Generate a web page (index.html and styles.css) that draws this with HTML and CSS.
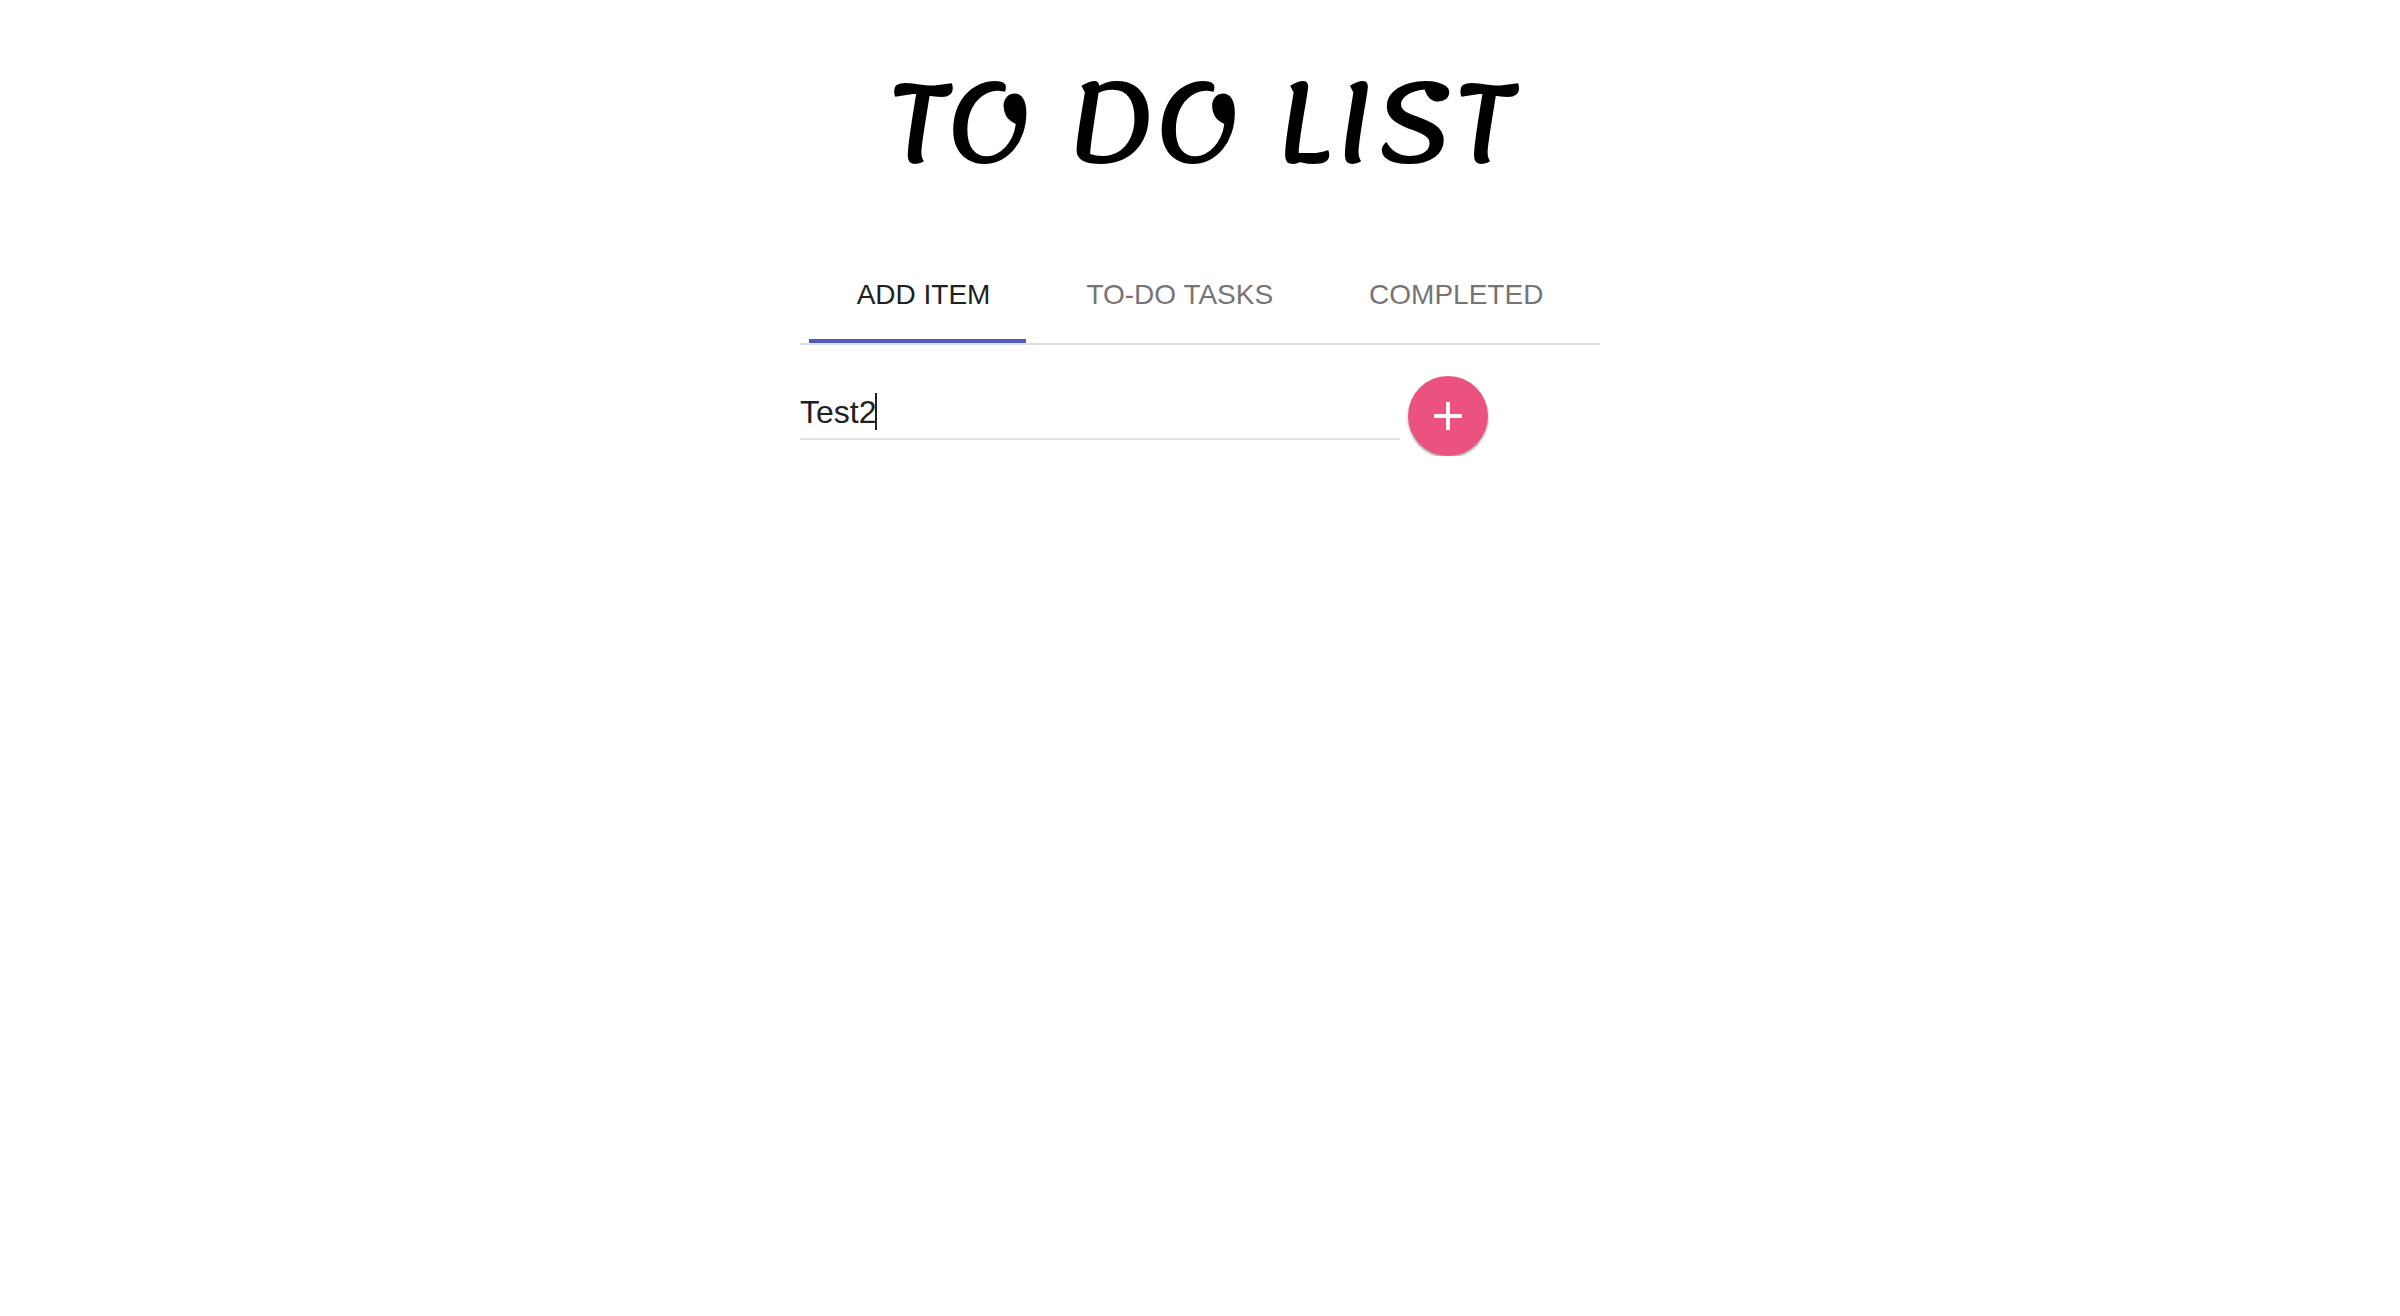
FILE: index.html
```html
<!DOCTYPE html>
<html lang="en">
<head>
<meta charset="utf-8">
<title>To Do List</title>
<link rel="stylesheet" href="styles.css">
</head>
<body>
<main class="app">
  <h1 class="title">TO DO LIST</h1>
  <nav class="tabs" aria-label="Lists">
    <a class="tab tab-active" href="#add">ADD ITEM</a>
    <a class="tab" href="#todo">TO-DO TASKS</a>
    <a class="tab" href="#completed">COMPLETED</a>
  </nav>
  <form class="add-form" id="add">
    <div class="field">
      <input class="field-input" type="text" value="Test2" aria-label="New item">
      <span class="caret"></span>
    </div>
    <button class="add-button" type="button" aria-label="Add item">
      <svg class="add-icon" viewBox="0 0 24 24" aria-hidden="true"><path fill="currentColor" d="M19 13h-6v6h-2v-6H5v-2h6V5h2v6h6v2z"/></svg>
    </button>
  </form>
</main>
</body>
</html>
```
FILE: styles.css
```css
* {
  box-sizing: border-box;
}

body {
  margin: 0;
  background: #fff;
  color: #212121;
  font-family: "Liberation Sans", Helvetica, Arial, sans-serif;
}

.app {
  width: 33.3333%;
  margin: 0 auto;
}

.title {
  margin: 0;
  padding: 48px 0;
  color: #000;
  font-family: Lemonada, Lato, sans-serif;
  font-size: 110px;
  font-weight: 400;
  line-height: 151px;
  text-align: center;
  white-space: nowrap;
}

.tabs {
  display: flex;
  justify-content: center;
  border-bottom: 2px solid #e0e0e0;
}

.tab {
  position: relative;
  padding: 0 48px;
  color: #757575;
  font-size: 28px;
  line-height: 96px;
  text-decoration: none;
  white-space: nowrap;
}

.tab-active {
  color: #212121;
}

.tab-active::after {
  content: "";
  position: absolute;
  bottom: 0;
  left: 0;
  width: 217px;
  height: 4px;
  background: #4f5db8;
}

.add-form {
  display: flex;
  gap: 8px;
  padding-top: 31px;
}

.field {
  position: relative;
  width: 75%;
}

.field-input {
  width: 100%;
  height: 64px;
  padding: 12px 0 2px;
  border: 0;
  border-bottom: 2px solid #e0e0e0;
  outline: 0;
  background: none;
  color: #212121;
  font-family: inherit;
  font-size: 32px;
}

.caret {
  position: absolute;
  top: 17px;
  left: 75px;
  width: 2px;
  height: 37px;
  background: #212121;
}

.add-button {
  display: grid;
  place-items: center;
  width: 80px;
  height: 80px;
  padding: 0;
  border: 0;
  border-radius: 50%;
  background: #ec5280;
  color: #fff;
  box-shadow: 0 2px 3px rgba(0, 0, 0, 0.24), 0 2px 2px rgba(0, 0, 0, 0.12);
}

.add-icon {
  width: 48px;
  height: 48px;
}
```
